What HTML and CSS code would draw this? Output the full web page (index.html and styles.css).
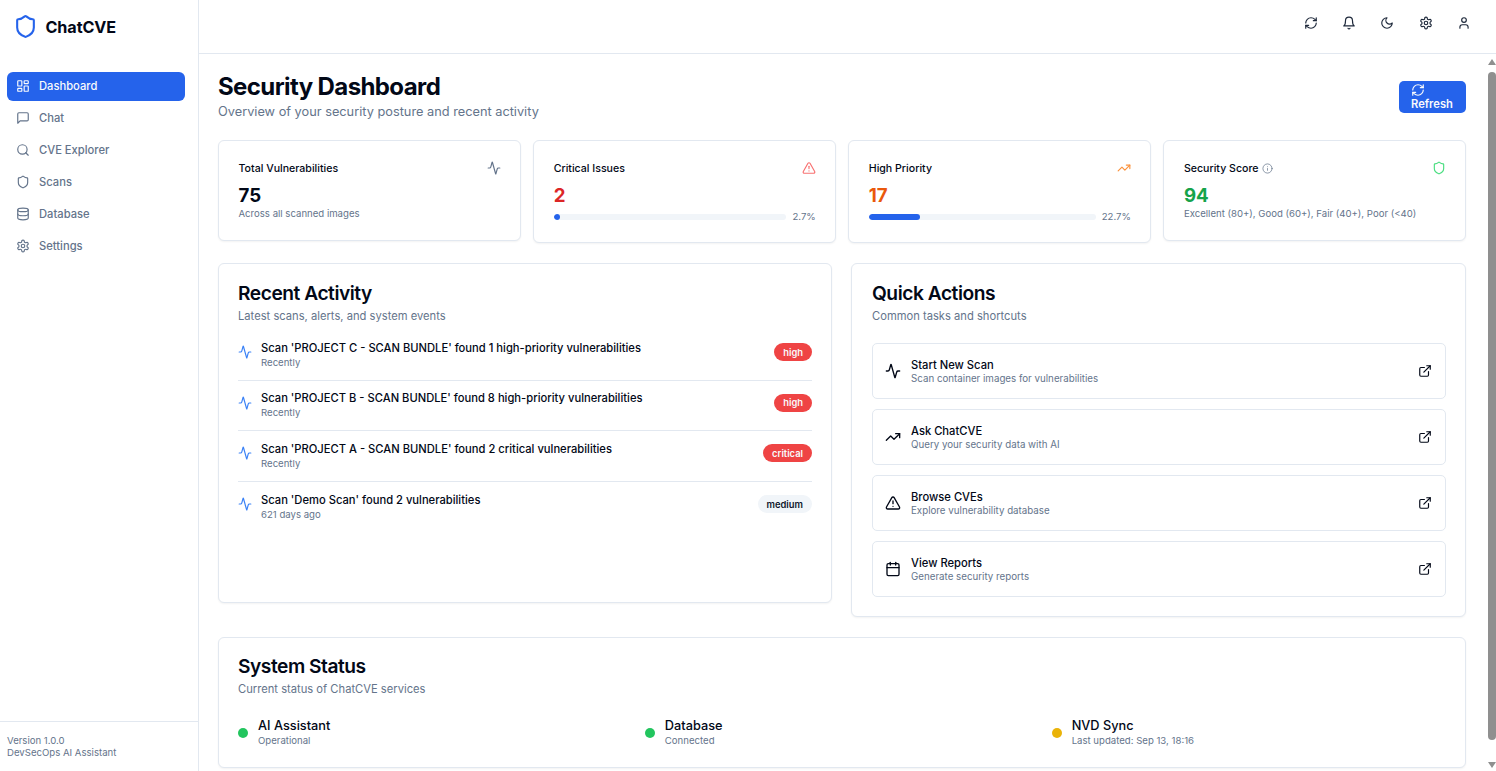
FILE: index.html
```html
<!DOCTYPE html>
<html lang="en">
<head>
    <meta charset="UTF-8">
    <meta name="viewport" content="width=device-width, initial-scale=1.0">
    <title>ChatCVE</title>
    <link rel="stylesheet" href="styles.css">
</head>
<body>
    <svg class="icon-defs" width="0" height="0" aria-hidden="true">
        <defs>
            <symbol id="i-shield" viewBox="0 0 24 24"><path d="M20 13c0 5-3.5 7.5-7.66 8.95a1 1 0 0 1-.67-.01C7.5 20.5 4 18 4 13V6a1 1 0 0 1 1-1c2 0 4.5-1.2 6.24-2.72a1.17 1.17 0 0 1 1.52 0C14.51 3.81 17 5 19 5a1 1 0 0 1 1 1z"/></symbol>
            <symbol id="i-grid" viewBox="0 0 24 24"><rect x="3" y="3" width="7" height="9" rx="1"/><rect x="14" y="3" width="7" height="5" rx="1"/><rect x="14" y="12" width="7" height="9" rx="1"/><rect x="3" y="16" width="7" height="5" rx="1"/></symbol>
            <symbol id="i-chat" viewBox="0 0 24 24"><path d="M21 15a2 2 0 0 1-2 2H7l-4 4V5a2 2 0 0 1 2-2h14a2 2 0 0 1 2 2z"/></symbol>
            <symbol id="i-search" viewBox="0 0 24 24"><circle cx="11" cy="11" r="8"/><path d="m21 21-4.3-4.3"/></symbol>
            <symbol id="i-db" viewBox="0 0 24 24"><ellipse cx="12" cy="5" rx="9" ry="3"/><path d="M3 5v14a9 3 0 0 0 18 0V5"/><path d="M3 12a9 3 0 0 0 18 0"/></symbol>
            <symbol id="i-gear" viewBox="0 0 24 24"><path d="M12.22 2h-.44a2 2 0 0 0-2 2v.18a2 2 0 0 1-1 1.73l-.43.25a2 2 0 0 1-2 0l-.15-.08a2 2 0 0 0-2.73.73l-.22.38a2 2 0 0 0 .73 2.73l.15.1a2 2 0 0 1 1 1.72v.51a2 2 0 0 1-1 1.74l-.15.09a2 2 0 0 0-.73 2.73l.22.38a2 2 0 0 0 2.73.73l.15-.08a2 2 0 0 1 2 0l.43.25a2 2 0 0 1 1 1.73V20a2 2 0 0 0 2 2h.44a2 2 0 0 0 2-2v-.18a2 2 0 0 1 1-1.73l.43-.25a2 2 0 0 1 2 0l.15.08a2 2 0 0 0 2.73-.73l.22-.39a2 2 0 0 0-.73-2.73l-.15-.08a2 2 0 0 1-1-1.74v-.5a2 2 0 0 1 1-1.74l.15-.09a2 2 0 0 0 .73-2.73l-.22-.38a2 2 0 0 0-2.73-.73l-.15.08a2 2 0 0 1-2 0l-.43-.25a2 2 0 0 1-1-1.73V4a2 2 0 0 0-2-2z"/><circle cx="12" cy="12" r="3"/></symbol>
            <symbol id="i-refresh" viewBox="0 0 24 24"><path d="M3 12a9 9 0 0 1 9-9 9.75 9.75 0 0 1 6.74 2.74L21 8"/><path d="M21 3v5h-5"/><path d="M21 12a9 9 0 0 1-9 9 9.75 9.75 0 0 1-6.74-2.74L3 16"/><path d="M8 16H3v5"/></symbol>
            <symbol id="i-bell" viewBox="0 0 24 24"><path d="M6 8a6 6 0 0 1 12 0c0 7 3 9 3 9H3s3-2 3-9"/><path d="M10.3 21a1.94 1.94 0 0 0 3.4 0"/></symbol>
            <symbol id="i-moon" viewBox="0 0 24 24"><path d="M12 3a6 6 0 0 0 9 9 9 9 0 1 1-9-9Z"/></symbol>
            <symbol id="i-user" viewBox="0 0 24 24"><path d="M19 21v-2a4 4 0 0 0-4-4H9a4 4 0 0 0-4 4v2"/><circle cx="12" cy="7" r="4"/></symbol>
            <symbol id="i-activity" viewBox="0 0 24 24"><path d="M22 12h-2.48a2 2 0 0 0-1.93 1.46l-2.35 8.36a.25.25 0 0 1-.48 0L9.24 2.18a.25.25 0 0 0-.48 0l-2.35 8.36A2 2 0 0 1 4.49 12H2"/></symbol>
            <symbol id="i-alert" viewBox="0 0 24 24"><path d="m21.73 18-8-14a2 2 0 0 0-3.48 0l-8 14A2 2 0 0 0 4 21h16a2 2 0 0 0 1.73-3"/><path d="M12 9v4"/><path d="M12 17h.01"/></symbol>
            <symbol id="i-trend" viewBox="0 0 24 24"><path d="M22 7 13.5 15.5l-5-5L2 17"/><path d="M16 7h6v6"/></symbol>
            <symbol id="i-info" viewBox="0 0 24 24"><circle cx="12" cy="12" r="10"/><path d="M12 16v-4"/><path d="M12 8h.01"/></symbol>
            <symbol id="i-calendar" viewBox="0 0 24 24"><path d="M8 2v4"/><path d="M16 2v4"/><rect x="3" y="4" width="18" height="18" rx="2"/><path d="M3 10h18"/></symbol>
            <symbol id="i-external" viewBox="0 0 24 24"><path d="M18 13v6a2 2 0 0 1-2 2H5a2 2 0 0 1-2-2V8a2 2 0 0 1 2-2h6"/><path d="m15 3 6 0 0 6"/><path d="M10 14 21 3"/></symbol>
        </defs>
    </svg>

    <div class="app">
        <aside class="sidebar">
            <div class="brand">
                <svg class="icon brand-icon"><use href="#i-shield"/></svg>
                <span class="brand-name">ChatCVE</span>
            </div>
            <nav class="nav">
                <a class="nav-item active"><svg class="icon"><use href="#i-grid"/></svg>Dashboard</a>
                <a class="nav-item"><svg class="icon"><use href="#i-chat"/></svg>Chat</a>
                <a class="nav-item"><svg class="icon"><use href="#i-search"/></svg>CVE Explorer</a>
                <a class="nav-item"><svg class="icon"><use href="#i-shield"/></svg>Scans</a>
                <a class="nav-item"><svg class="icon"><use href="#i-db"/></svg>Database</a>
                <a class="nav-item"><svg class="icon"><use href="#i-gear"/></svg>Settings</a>
            </nav>
            <div class="sidebar-foot">
                <div>Version 1.0.0</div>
                <div>DevSecOps AI Assistant</div>
            </div>
        </aside>

        <div class="right">
            <header class="topbar">
                <svg class="icon"><use href="#i-refresh"/></svg>
                <svg class="icon"><use href="#i-bell"/></svg>
                <svg class="icon"><use href="#i-moon"/></svg>
                <svg class="icon"><use href="#i-gear"/></svg>
                <svg class="icon"><use href="#i-user"/></svg>
            </header>

            <div class="content">
                <main class="main">
                    <div class="page-head">
                        <div>
                            <h1>Security Dashboard</h1>
                            <p>Overview of your security posture and recent activity</p>
                        </div>
                        <button class="refresh-btn"><svg class="icon"><use href="#i-refresh"/></svg>Refresh</button>
                    </div>

                    <section class="stats">
                        <div class="card stat short">
                            <div class="stat-top"><span>Total Vulnerabilities</span><svg class="icon c-slate"><use href="#i-activity"/></svg></div>
                            <div class="stat-num">75</div>
                            <div class="stat-note">Across all scanned images</div>
                        </div>
                        <div class="card stat">
                            <div class="stat-top"><span>Critical Issues</span><svg class="icon c-red"><use href="#i-alert"/></svg></div>
                            <div class="stat-num t-red">2</div>
                            <div class="progress-row">
                                <div class="progress"><div class="progress-fill" style="width: 2.7%"></div></div>
                                <span>2.7%</span>
                            </div>
                        </div>
                        <div class="card stat">
                            <div class="stat-top"><span>High Priority</span><svg class="icon c-orange"><use href="#i-trend"/></svg></div>
                            <div class="stat-num t-orange">17</div>
                            <div class="progress-row">
                                <div class="progress"><div class="progress-fill" style="width: 22.7%"></div></div>
                                <span>22.7%</span>
                            </div>
                        </div>
                        <div class="card stat short">
                            <div class="stat-top"><span class="label-info">Security Score<svg class="icon info"><use href="#i-info"/></svg></span><svg class="icon c-green"><use href="#i-shield"/></svg></div>
                            <div class="stat-num t-green">94</div>
                            <div class="stat-note">Excellent (80+), Good (60+), Fair (40+), Poor (&lt;40)</div>
                        </div>
                    </section>

                    <section class="columns">
                        <div class="card panel activity">
                            <h2>Recent Activity</h2>
                            <p class="panel-sub">Latest scans, alerts, and system events</p>
                            <div class="activity-list">
                                <div class="activity-row">
                                    <svg class="icon"><use href="#i-activity"/></svg>
                                    <div class="activity-text">
                                        <div class="activity-title">Scan 'PROJECT C - SCAN BUNDLE' found 1 high-priority vulnerabilities</div>
                                        <div class="activity-time">Recently</div>
                                    </div>
                                    <span class="badge badge-red">high</span>
                                </div>
                                <div class="activity-row">
                                    <svg class="icon"><use href="#i-activity"/></svg>
                                    <div class="activity-text">
                                        <div class="activity-title">Scan 'PROJECT B - SCAN BUNDLE' found 8 high-priority vulnerabilities</div>
                                        <div class="activity-time">Recently</div>
                                    </div>
                                    <span class="badge badge-red">high</span>
                                </div>
                                <div class="activity-row">
                                    <svg class="icon"><use href="#i-activity"/></svg>
                                    <div class="activity-text">
                                        <div class="activity-title">Scan 'PROJECT A - SCAN BUNDLE' found 2 critical vulnerabilities</div>
                                        <div class="activity-time">Recently</div>
                                    </div>
                                    <span class="badge badge-red">critical</span>
                                </div>
                                <div class="activity-row">
                                    <svg class="icon"><use href="#i-activity"/></svg>
                                    <div class="activity-text">
                                        <div class="activity-title">Scan 'Demo Scan' found 2 vulnerabilities</div>
                                        <div class="activity-time">621 days ago</div>
                                    </div>
                                    <span class="badge badge-grey">medium</span>
                                </div>
                            </div>
                        </div>

                        <div class="card panel actions">
                            <h2>Quick Actions</h2>
                            <p class="panel-sub">Common tasks and shortcuts</p>
                            <div class="action-list">
                                <a class="action">
                                    <svg class="icon action-icon"><use href="#i-activity"/></svg>
                                    <div class="action-text"><div class="action-title">Start New Scan</div><div class="action-sub">Scan container images for vulnerabilities</div></div>
                                    <svg class="icon action-link"><use href="#i-external"/></svg>
                                </a>
                                <a class="action">
                                    <svg class="icon action-icon"><use href="#i-trend"/></svg>
                                    <div class="action-text"><div class="action-title">Ask ChatCVE</div><div class="action-sub">Query your security data with AI</div></div>
                                    <svg class="icon action-link"><use href="#i-external"/></svg>
                                </a>
                                <a class="action">
                                    <svg class="icon action-icon"><use href="#i-alert"/></svg>
                                    <div class="action-text"><div class="action-title">Browse CVEs</div><div class="action-sub">Explore vulnerability database</div></div>
                                    <svg class="icon action-link"><use href="#i-external"/></svg>
                                </a>
                                <a class="action">
                                    <svg class="icon action-icon"><use href="#i-calendar"/></svg>
                                    <div class="action-text"><div class="action-title">View Reports</div><div class="action-sub">Generate security reports</div></div>
                                    <svg class="icon action-link"><use href="#i-external"/></svg>
                                </a>
                            </div>
                        </div>
                    </section>

                    <section class="card panel status">
                        <h2>System Status</h2>
                        <p class="panel-sub">Current status of ChatCVE services</p>
                        <div class="status-grid">
                            <div class="status-item">
                                <span class="dot dot-green"></span>
                                <div><div class="status-name">AI Assistant</div><div class="status-note">Operational</div></div>
                            </div>
                            <div class="status-item">
                                <span class="dot dot-green"></span>
                                <div><div class="status-name">Database</div><div class="status-note">Connected</div></div>
                            </div>
                            <div class="status-item">
                                <span class="dot dot-yellow"></span>
                                <div><div class="status-name">NVD Sync</div><div class="status-note">Last updated: Sep 13, 18:16</div></div>
                            </div>
                        </div>
                    </section>
                </main>

                <div class="scrollbar" aria-hidden="true">
                    <span class="scroll-up"></span>
                    <span class="scroll-thumb"></span>
                    <span class="scroll-down"></span>
                </div>
            </div>
        </div>
    </div>
</body>
</html>
```

FILE: styles.css
```css
* {
    box-sizing: border-box;
}
html, body {
    height: 100%;
}
body {
    margin: 0;
    overflow: hidden;
    font-family: Inter, "Noto Sans", sans-serif;
    color: #020817;
    background-color: #fff;
}
h1, h2, p {
    margin: 0;
}
.icon-defs {
    position: absolute;
}
.icon {
    width: 14px;
    height: 14px;
    flex: none;
    fill: none;
    stroke: currentColor;
    stroke-width: 2;
    stroke-linecap: round;
    stroke-linejoin: round;
}
.app {
    display: flex;
    height: 771px;
}

/* sidebar */
.sidebar {
    width: 199px;
    flex: none;
    display: flex;
    flex-direction: column;
    border-right: 1px solid #e2e8f0;
}
.brand {
    display: flex;
    align-items: center;
    gap: 7.5px;
    height: 54px;
    padding: 0 0 1px 13px;
}
.brand-icon {
    width: 25px;
    height: 25px;
    color: #2563eb;
}
.brand-name {
    font-size: 16.2px;
    font-weight: 700;
    letter-spacing: -0.1px;
}
.nav {
    flex: 1;
    display: flex;
    flex-direction: column;
    gap: 3px;
    padding: 18px 13px 0 7px;
}
.nav-item {
    display: flex;
    align-items: center;
    gap: 9px;
    height: 29px;
    padding: 0 0 1px 9px;
    border-radius: 6px;
    font-size: 11.2px;
    font-weight: 500;
    color: #64748b;
}
.nav-item.active {
    background-color: #2563eb;
    color: #f8fafc;
}
.sidebar-foot {
    height: 50px;
    padding: 13px 7px 0;
    border-top: 1px solid #e2e8f0;
    font-size: 9.6px;
    line-height: 12px;
    color: #64748b;
}

/* top bar */
.right {
    flex: 1;
    min-width: 0;
    display: flex;
    flex-direction: column;
}
.topbar {
    display: flex;
    justify-content: flex-end;
    align-items: center;
    gap: 24.3px;
    height: 54px;
    flex: none;
    padding: 0 25px 7px 0;
    border-bottom: 1px solid #e2e8f0;
}
.topbar .icon {
    color: #1e293b;
}

/* main area */
.content {
    flex: 1;
    min-height: 0;
    display: flex;
}
.main {
    flex: 1;
    min-width: 0;
    overflow: hidden;
    padding: 19px 22px 0 19px;
}
.scrollbar {
    width: 8px;
    flex: none;
    display: flex;
    flex-direction: column;
    align-items: center;
    padding-top: 5px;
}
.scroll-up {
    border-left: 4px solid transparent;
    border-right: 4px solid transparent;
    border-bottom: 6px solid #8f8f8f;
}
.scroll-thumb {
    width: 8px;
    height: 668px;
    margin: 7px 0 22px;
    border-radius: 4px;
    background-color: #8f8f8f;
}
.scroll-down {
    border-left: 4px solid transparent;
    border-right: 4px solid transparent;
    border-top: 6px solid #8f8f8f;
}
.page-head {
    display: flex;
    justify-content: space-between;
    align-items: center;
    height: 48px;
    margin-bottom: 19px;
}
h1 {
    font-size: 24px;
    line-height: 28px;
    font-weight: 700;
    letter-spacing: -0.6px;
}
.page-head p {
    margin-top: 1px;
    font-size: 12.78px;
    line-height: 20px;
    color: #64748b;
}
.refresh-btn {
    width: 67px;
    height: 32px;
    display: flex;
    flex-direction: column;
    align-items: flex-start;
    border: none;
    border-radius: 5px;
    background-color: #2563eb;
    color: #f8fafc;
    font-family: inherit;
    font-size: 11.2px;
    font-weight: 600;
    line-height: 15px;
    padding: 1.5px 0 0 12px;
}
.card {
    background-color: #fff;
    border: 1px solid #e2e8f0;
    border-radius: 6px;
    box-shadow: 0 1px 2px rgba(0, 0, 0, 0.05);
}

/* stat cards */
.stats {
    display: grid;
    grid-template-columns: repeat(4, 1fr);
    align-items: start;
    gap: 12.5px;
    margin-bottom: 20px;
}
.stat {
    height: 103px;
    padding: 19px 19px 0 19.5px;
}
.stat.short {
    height: 101px;
}
.stat-top {
    display: flex;
    justify-content: space-between;
    align-items: center;
    height: 16px;
    font-size: 10.6px;
    font-weight: 500;
}
.label-info {
    display: flex;
    align-items: center;
    gap: 3px;
}
.stat-top .info {
    width: 11px;
    height: 11px;
    color: #64748b;
    stroke-width: 1.6;
}
.c-slate {
    color: #64748b;
}
.c-red {
    color: #f87171;
}
.c-orange {
    color: #fb923c;
}
.c-green {
    color: #4ade80;
}
.stat-num {
    margin-top: 8px;
    font-size: 18.7px;
    line-height: 24px;
    font-weight: 700;
}
.t-red {
    color: #dc2626;
}
.t-orange {
    color: #ea580c;
}
.t-green {
    color: #16a34a;
}
.stat-note {
    margin-top: -1px;
    font-size: 9.6px;
    line-height: 13px;
    color: #64748b;
}
.progress-row {
    display: flex;
    align-items: center;
    gap: 6px;
    height: 13px;
    margin-top: 2px;
    font-size: 9.6px;
    color: #64748b;
}
.progress {
    flex: 1;
    height: 6px;
    border-radius: 3px;
    background-color: #f1f5f9;
    overflow: hidden;
}
.progress-fill {
    height: 100%;
    border-radius: 3px;
    background-color: #2563eb;
}

/* panels */
.columns {
    display: flex;
    align-items: flex-start;
    gap: 19px;
    margin-bottom: 20px;
}
.panel {
    padding: 19px;
}
h2 {
    font-size: 19.2px;
    line-height: 20px;
    font-weight: 600;
    letter-spacing: -0.47px;
}
.panel-sub {
    margin-top: 5px;
    font-size: 11.2px;
    line-height: 16px;
    color: #64748b;
}
.activity {
    width: 614px;
    height: 340px;
}
.actions {
    flex: 1;
    height: 354px;
    padding-left: 20px;
}

/* activity list */
.activity-list {
    margin-top: 6px;
}
.activity-row {
    display: flex;
    align-items: center;
    gap: 9px;
    height: 50.5px;
    border-bottom: 1px solid #e2e8f0;
}
.activity-row:last-child {
    border-bottom: none;
}
.activity-row .icon {
    margin-bottom: 5px;
    color: #3b82f6;
}
.activity-text {
    flex: 1;
}
.activity-title {
    font-size: 11.2px;
    line-height: 16px;
    font-weight: 500;
}
.activity-time {
    font-size: 9.6px;
    line-height: 14px;
    color: #64748b;
}
.badge {
    height: 18px;
    margin-bottom: 5px;
    padding: 0 9px;
    display: flex;
    align-items: center;
    border-radius: 9px;
    font-size: 9.4px;
    font-weight: 600;
}
.badge-red {
    background-color: #ef4444;
    color: #f8fafc;
}
.badge-grey {
    background-color: #f1f5f9;
    color: #0f172a;
}

/* quick actions */
.action-list {
    display: flex;
    flex-direction: column;
    gap: 10px;
    margin-top: 19px;
}
.action {
    display: flex;
    align-items: center;
    height: 56px;
    padding: 0 13px 0 12px;
    border: 1px solid #e2e8f0;
    border-radius: 5px;
}
.action-icon {
    width: 16px;
    height: 16px;
    margin-right: 10px;
}
.action-text {
    flex: 1;
}
.action-title {
    font-size: 11.2px;
    line-height: 14px;
    font-weight: 500;
}
.action-sub {
    font-size: 9.75px;
    line-height: 13px;
    color: #64748b;
}

/* system status */
.status {
    height: 131px;
    padding-top: 18px;
}
.status-grid {
    display: grid;
    grid-template-columns: repeat(3, 1fr);
    gap: 12.5px;
    margin-top: 21px;
}
.status-item {
    display: flex;
    align-items: center;
    gap: 10px;
}
.dot {
    width: 10px;
    height: 10px;
    border-radius: 50%;
}
.dot-green {
    background-color: #22c55e;
}
.dot-yellow {
    background-color: #eab308;
}
.status-name {
    font-size: 12.75px;
    line-height: 16px;
    font-weight: 500;
}
.status-note {
    font-size: 9.6px;
    line-height: 14px;
    color: #64748b;
}
```
